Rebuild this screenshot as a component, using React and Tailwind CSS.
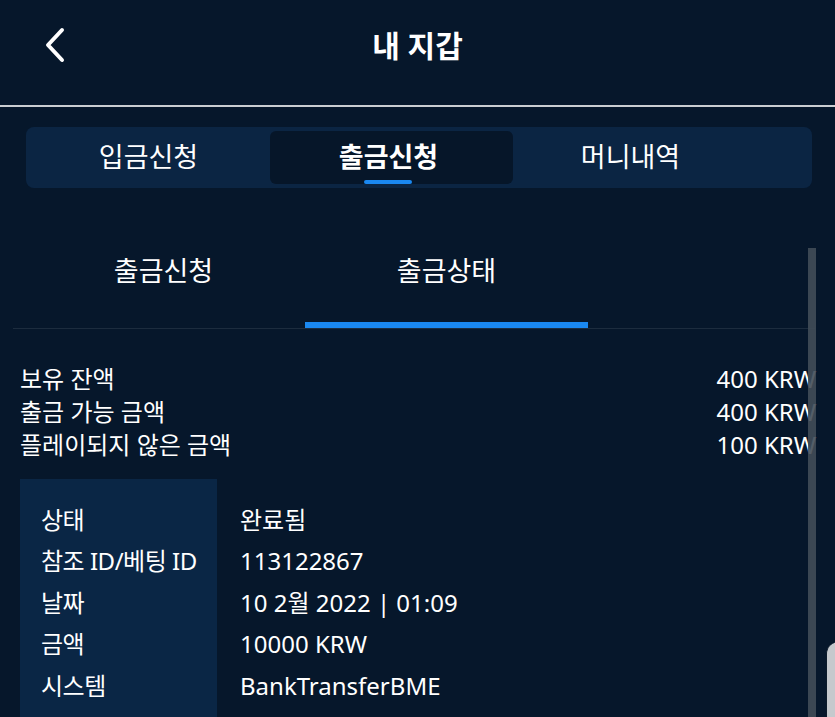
const balances = [
  { label: "보유 잔액", value: "400 KRW" },
  { label: "출금 가능 금액", value: "400 KRW" },
  { label: "플레이되지 않은 금액", value: "100 KRW" },
];

const details = [
  { label: "상태", value: "완료됨" },
  { label: "참조 ID/베팅 ID", value: "113122867" },
  { label: "날짜", value: "10 2월 2022 | 01:09" },
  { label: "금액", value: "10000 KRW" },
  { label: "시스템", value: "BankTransferBME" },
];

export default function App() {
  return (
    <div
      className="relative h-[717px] w-[835px] overflow-hidden bg-[#06172b] text-white"
      style={{ fontFamily: '"Noto Sans", "Noto Sans CJK KR", sans-serif' }}
    >
      {/* Header */}
      <div className="relative flex h-[91px] items-center justify-center">
        <button className="absolute left-[40px] top-[26px] flex h-[38px] w-[30px] items-center justify-center">
          <svg width="30" height="38" viewBox="0 0 30 38" fill="none">
            <polyline
              points="22,4 8,19 22,34"
              stroke="white"
              strokeWidth="4"
              strokeLinecap="round"
              strokeLinejoin="round"
            />
          </svg>
        </button>
        <h1 className="text-[30px] font-bold">내 지갑</h1>
      </div>
      <div className="mt-[14px] h-[2px] bg-[#c9cdd1]" />

      {/* Main tabs */}
      <div className="ml-[26px] mr-[23px] mt-[20px] flex h-[61px] items-center rounded-lg bg-[#0b2543] pl-[1px]">
        <div className="flex h-[53px] w-[243px] items-center justify-center text-[27px]">
          입금신청
        </div>
        <div className="relative flex h-[53px] w-[243px] items-center justify-center rounded-md bg-[#061629] pr-[6px] text-[27px] font-bold">
          출금신청
          <span className="absolute bottom-0 left-[94px] h-[4px] w-[48px] rounded-full bg-[#1a88f0]" />
        </div>
        <div className="flex h-[53px] w-[243px] items-center justify-center pr-[8px] text-[27px]">
          머니내역
        </div>
      </div>

      {/* Scroll area */}
      <div className="relative mt-[60px]">
        <div className="ml-[13px] mr-[20px] border-b border-[#1c2c3e]">
          <div className="ml-[9px] flex">
            <div className="flex h-[80px] w-[283px] items-start justify-center pt-[3px] text-[27px]">
              출금신청
            </div>
            <div className="relative flex h-[80px] w-[283px] items-start justify-center pt-[3px] text-[27px]">
              출금상태
              <span className="absolute bottom-0 left-0 h-[6px] w-full bg-[#1a88f0]" />
            </div>
          </div>
        </div>

        <div className="ml-[20px] mr-[19px] mt-[33px] flex flex-col text-[24px] leading-[33px]">
          {balances.map((b) => (
            <div key={b.label} className="flex justify-between">
              <span>{b.label}</span>
              <span>{b.value}</span>
            </div>
          ))}
        </div>

        <div className="ml-[20px] mt-[18px] flex text-[24px]">
          <div className="flex w-[197px] flex-col bg-[#0a2645] pl-[21px] pt-[20px] pb-[10px]">
            {details.map((d) => (
              <div key={d.label} className="flex h-[41.5px] items-center whitespace-nowrap tracking-[-0.02em]">
                {d.label}
              </div>
            ))}
          </div>
          <div className="flex flex-col pl-[23px] pt-[20px]">
            {details.map((d) => (
              <div key={d.label} className="flex h-[41.5px] items-center whitespace-nowrap">
                {d.value}
              </div>
            ))}
          </div>
        </div>

        {/* Scrollbar */}
        <div className="absolute right-[19px] top-0 h-[500px] w-[8px] bg-[#414c58]/90" />
      </div>

      {/* Floating widget edge */}
      <div className="absolute left-[826px] top-[642px] h-[100px] w-[30px] rounded-tl-xl border-l border-[#0b1a2a] bg-[#c5c9cd]" />
    </div>
  );
}
